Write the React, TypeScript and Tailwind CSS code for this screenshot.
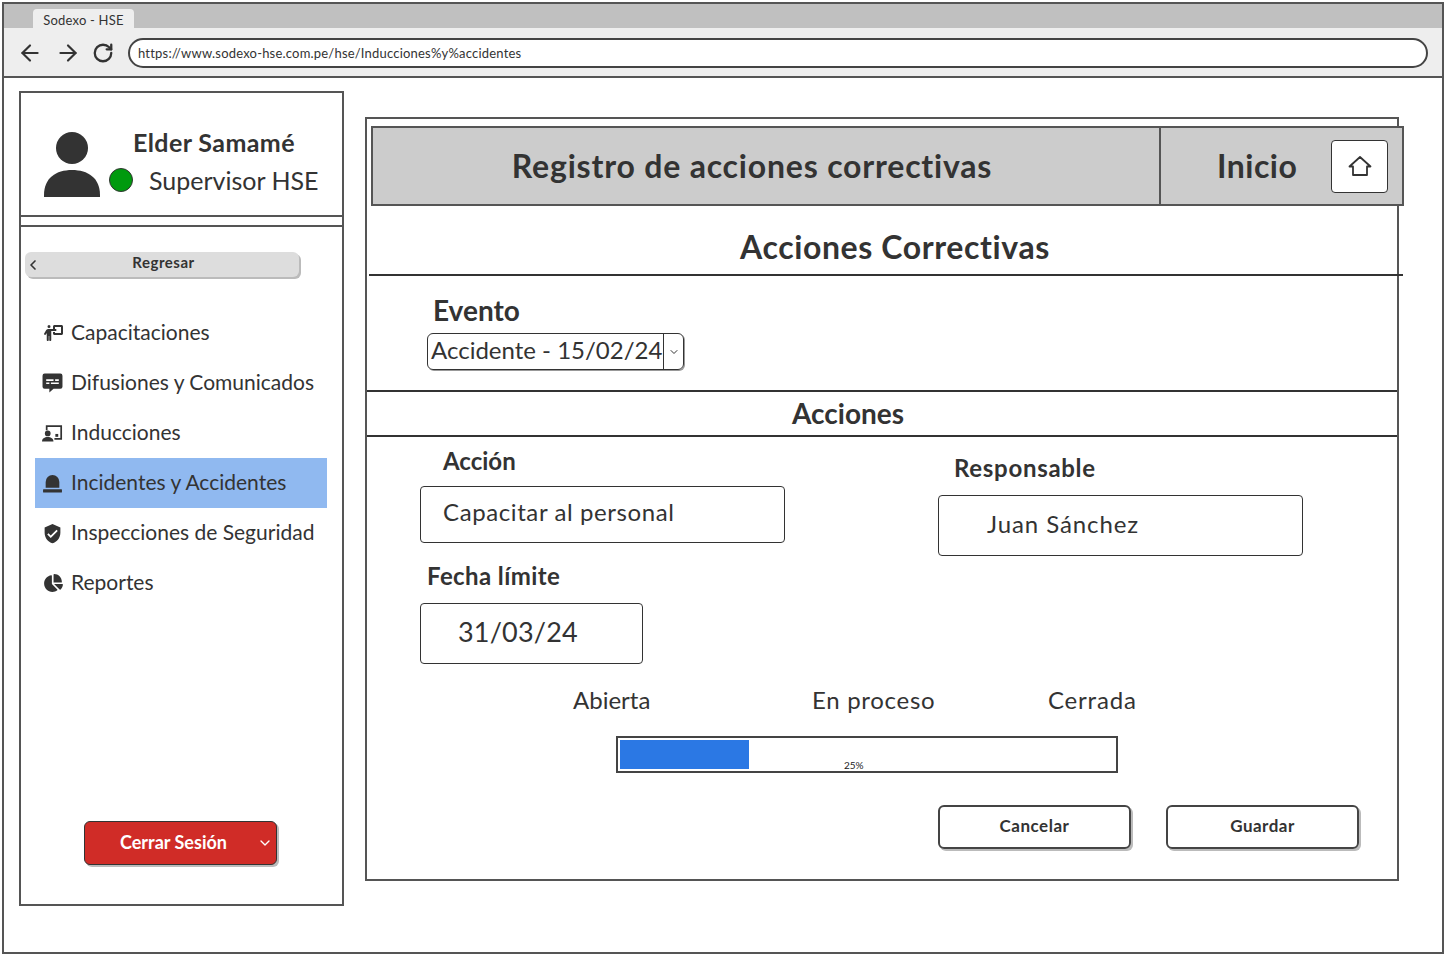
import { ArrowLeft, ArrowRight, RotateCw, ChevronDown, ChevronLeft } from 'lucide-react';
import { FaPersonChalkboard, FaChartPie } from 'react-icons/fa6';
import { MdVerifiedUser } from 'react-icons/md';

function BubbleIcon() {
  return (
    <svg viewBox="0 0 20 20" className="w-[22px] h-[22px]" fill="currentColor">
      <path fillRule="evenodd" d="M2.500 1h15A2 2 0 0 1 19.500 3v10.500a2 2 0 0 1-2 2H11l-4 3.500v-3.500H2.500a2 2 0 0 1-2-2V3a2 2 0 0 1 2-2zM4 6.500V8h7V6.500zm8.500 0V8H16V6.500zM4 9.500V11h3V9.500zm4.500 0V11H16V9.500z" />
    </svg>
  );
}

function BoardIcon() {
  return (
    <svg viewBox="0 0 22 20" className="w-[22px] h-5" fill="currentColor">
      <path d="M4 2h17v15h-8v-1.800h6.200V3.800H5.800V7H4z" />
      <circle cx="6" cy="10.500" r="3" />
      <path d="M0 19c0-3.200 2.600-4.800 6-4.800s6 1.600 6 4.800z" />
      <rect x="14" y="11" width="3" height="3" />
    </svg>
  );
}

function SirenIcon() {
  return (
    <svg viewBox="0 0 20 20" className="w-[21px] h-[21px]" fill="currentColor">
      <path d="M3.500 14V8.500a6.500 6.500 0 0 1 13 0V14z" />
      <rect x="1" y="15.500" width="18" height="3" rx="0.500" />
    </svg>
  );
}

const navItems = [
  { label: 'Capacitaciones', icon: <FaPersonChalkboard className="w-5 h-5" /> },
  { label: 'Difusiones y Comunicados', icon: <BubbleIcon /> },
  { label: 'Inducciones', icon: <BoardIcon /> },
  { label: 'Incidentes y Accidentes', icon: <SirenIcon />, active: true },
  { label: 'Inspecciones de Seguridad', icon: <MdVerifiedUser className="w-[23px] h-[23px]" /> },
  { label: 'Reportes', icon: <FaChartPie className="w-5 h-5" /> },
];

function Sidebar() {
  return (
    <aside className="w-[325px] h-[815px] border-2 border-[#555] flex flex-col shrink-0">
      <div className="h-[124px] flex border-b-2 border-[#555] pl-[23px] pt-[38px]">
        <svg viewBox="0 0 56 66" className="w-14 h-[66px] shrink-0 text-[#333]" fill="currentColor">
          <circle cx="28" cy="17" r="16" />
          <path d="M0 64C0 47 12 39 28 39s28 8 28 25v2H0z" />
        </svg>
        <div className="w-[24px] h-[24px] rounded-full bg-[#009a0e] border border-[#333] ml-[9px] mt-[37px] shrink-0" />
        <div className="flex flex-col -mt-[4px]">
          <span className="text-[25px] leading-[30px] font-bold tracking-[0.4px] text-[#333]">Elder Samamé</span>
          <span className="text-[25px] leading-[30px] text-[#333] ml-[16px] mt-[8px]">Supervisor HSE</span>
        </div>
      </div>
      <div className="h-[10px] border-b-2 border-[#555]" />
      <div className="ml-[4px] mt-[25px] w-[274px] h-[25px] bg-[#ddd] rounded-md shadow-[2px_2px_0_#bbb] flex items-center relative">
        <ChevronLeft className="w-4 h-4 text-[#333]" strokeWidth={2.500} />
        <span className="absolute left-0 right-[-3px] -top-[2px] text-center text-[15px] leading-[24px] font-bold tracking-[0.500px] text-[#333]">Regresar</span>
      </div>
      <nav className="mt-[31px] flex flex-col">
        {navItems.map((item) => (
          <div
            key={item.label}
            className={`h-[50px] flex items-center ml-[14px] mr-[15px] pl-[7px] gap-[8px] text-[21px] text-[#333] ${item.active ? 'bg-[#90b9f0]' : ''}`}
          >
            <span className="w-[21px] flex justify-center shrink-0">{item.icon}</span>
            <span className="whitespace-nowrap pb-[3px]">{item.label}</span>
          </div>
        ))}
      </nav>
      <div className="mt-auto mb-[39px] ml-[63px] w-[193px] h-[44px] bg-[#d02c27] border border-[#333] rounded-md shadow-[2px_2px_0_#bbb] flex items-center relative">
        <span className="w-full text-center text-[18px] font-bold text-white pr-[14px] pb-[2px]">Cerrar Sesión</span>
        <ChevronDown className="absolute right-[3px] w-4 h-4 text-white" />
      </div>
    </aside>
  );
}

function Field({ text, className, textClass }: { text: string; className: string; textClass: string }) {
  return (
    <div className={`border border-[#333] rounded-[4px] flex items-center ${className}`}>
      <span className={`text-[#333] ${textClass}`}>{text}</span>
    </div>
  );
}

function OutlineButton({ label }: { label: string }) {
  return (
    <button className="w-[193px] h-[44px] border-2 border-[#444] rounded-md shadow-[2px_2px_0_#bbb] pb-[2px] text-[17px] font-bold tracking-[0.500px] text-[#333]">
      {label}
    </button>
  );
}

function MainPanel() {
  return (
    <main className="w-[1034px] h-[764px] border-2 border-[#555] ml-[21px] mt-[26px] flex flex-col shrink-0">
      <div className="mt-[7px] ml-[4px] w-[1033px] h-[80px] bg-[#ccc] border-2 border-[#555] flex shrink-0">
        <div className="w-[786px] flex items-center justify-center pr-[28px]">
          <h1 className="text-[32px] font-bold tracking-[0.800px] text-[#333] whitespace-nowrap">Registro de acciones correctivas</h1>
        </div>
        <div className="flex-1 border-l-2 border-[#555] flex items-center pl-[56px]">
          <span className="text-[32px] font-bold tracking-[0.500px] text-[#333]">Inicio</span>
          <div className="ml-[34px] w-[57px] h-[53px] bg-white border border-[#333] rounded-[4px] flex items-center justify-center">
            <svg viewBox="0 0 24 24" className="w-6 h-6 text-[#333]" fill="none" stroke="currentColor" strokeWidth="1.800" strokeLinejoin="round">
              <path d="M1.500 12.500 12 3l10.500 9.500H19V21H5v-8.500z" />
            </svg>
          </div>
        </div>
      </div>

      <div className="ml-[2px] w-[1034px] h-[70px] border-b-2 border-[#333] pl-[18px] pt-[17px] text-center shrink-0">
        <h2 className="text-[32px] leading-[48px] font-bold tracking-[0.600px] text-[#333]">Acciones Correctivas</h2>
      </div>

      <div className="h-[116px] pl-[60px] border-b-2 border-[#333] shrink-0">
        <h3 className="ml-[6px] mt-[16px] text-[28px] leading-[36px] font-bold text-[#333]">Evento</h3>
        <div className="mt-[5px] w-[257px] h-[37px] border border-[#333] rounded-md shadow-[1px_1px_0_#999] flex items-center">
          <span className="flex-1 pl-[3px] pb-[3px] text-[24px] text-[#333] whitespace-nowrap">Accidente - 15/02/24</span>
          <span className="w-[20px] h-full border-l border-[#333] flex items-center justify-center">
            <ChevronDown className="w-3 h-3 text-[#333]" />
          </span>
        </div>
      </div>

      <div className="h-[45px] border-b-2 border-[#333] flex items-center justify-center pr-[68px] pb-[1px] shrink-0">
        <h3 className="text-[28px] font-bold text-[#333]">Acciones</h3>
      </div>

      <div className="flex pl-[53px] h-[229px] shrink-0">
        <div className="w-[518px]">
          <div className="ml-[23px] mt-[10px] text-[24px] leading-[28px] font-bold text-[#333]">Acción</div>
          <Field text="Capacitar al personal" className="mt-[11px] w-[365px] h-[57px] pl-[22px] pb-[5px]" textClass="text-[24px] tracking-[0.600px]" />
          <div className="ml-[7px] mt-[18px] text-[24px] leading-[30px] font-bold tracking-[0.400px] text-[#333]">Fecha límite</div>
          <Field text="31/03/24" className="mt-[12px] w-[223px] h-[61px] pl-[37px] pb-[2px]" textClass="text-[27px] tracking-[0.200px]" />
        </div>
        <div>
          <div className="ml-[16px] mt-[17px] text-[24px] leading-[28px] font-bold tracking-[0.700px] text-[#333]">Responsable</div>
          <Field text="Juan Sánchez" className="mt-[13px] w-[365px] h-[61px] pl-[48px] pb-[4px]" textClass="text-[24px] tracking-[0.900px]" />
        </div>
      </div>

      <div className="flex pl-[206px] mt-[19px] text-[24px] leading-[30px] text-[#333] shrink-0">
        <span className="w-[239px]">Abierta</span>
        <span className="w-[236px] tracking-[0.700px]">En proceso</span>
        <span className="tracking-[0.800px]">Cerrada</span>
      </div>

      <div className="relative ml-[249px] mt-[21px] w-[502px] h-[37px] border-2 border-[#444] py-[2px] pl-[2px] shrink-0">
        <div className="w-[129px] h-[29px] bg-[#2b78e4]" />
        <span className="absolute left-[226px] bottom-[0px] text-[10px] leading-[12px] text-[#222]">25%</span>
      </div>

      <div className="flex justify-end gap-[35px] pr-[38px] mt-[32px] shrink-0">
        <OutlineButton label="Cancelar" />
        <OutlineButton label="Guardar" />
      </div>
    </main>
  );
}

export default function App() {
  return (
    <div className="w-[1446px] h-[956px] bg-white p-[2px] font-['Lato',sans-serif] overflow-hidden">
      <div className="w-[1442px] h-[952px] border-2 border-[#555] flex flex-col">
        <div className="h-[24px] bg-[#c0c0c0] pl-[29px] pt-[5px] shrink-0">
          <div className="w-[101px] h-[19px] bg-[#eee] rounded-t-[4px] flex items-center justify-center pt-[5px] text-[13px] tracking-[0.200px] text-[#333]">
            Sodexo - HSE
          </div>
        </div>
        <div className="h-[50px] bg-[#eee] border-b-2 border-[#555] flex items-center pl-[13px] pt-[2px] shrink-0">
          <ArrowLeft className="w-[26px] h-[26px] text-[#333]" strokeWidth={2} />
          <ArrowRight className="w-[26px] h-[26px] ml-[12px] text-[#333]" strokeWidth={2} />
          <RotateCw className="w-[22px] h-[22px] ml-[11px] text-[#333]" strokeWidth={2.500} />
          <div className="ml-[14px] w-[1300px] h-[30px] bg-white border-2 border-[#444] rounded-full flex items-center pl-[8px] pt-[2px] text-[13px] tracking-[0.200px] text-[#333] whitespace-nowrap">
            https://www.sodexo-hse.com.pe/hse/Inducciones%y%accidentes
          </div>
        </div>
        <div className="flex pl-[15px] pt-[13px]">
          <Sidebar />
          <MainPanel />
        </div>
      </div>
    </div>
  );
}
